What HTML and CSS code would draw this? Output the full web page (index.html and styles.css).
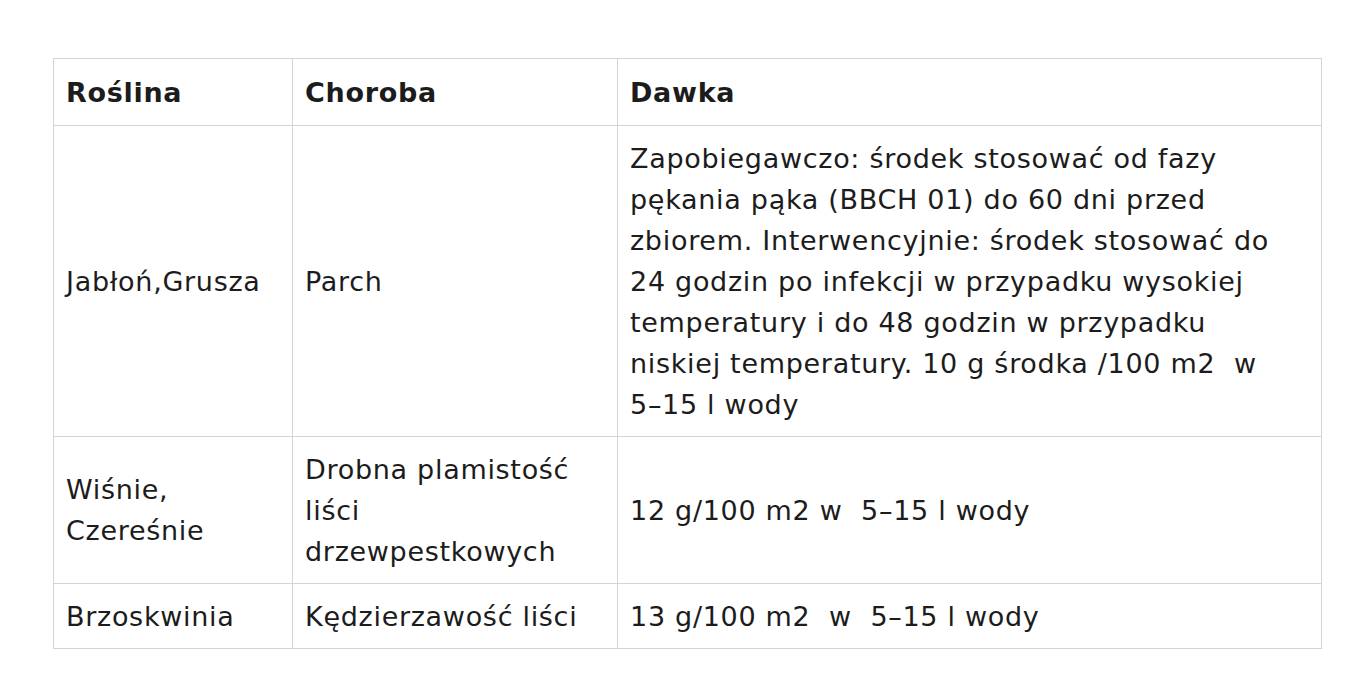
FILE: index.html
```html
<!DOCTYPE html>
<html lang="pl">
<head>
<meta charset="utf-8">
<link rel="stylesheet" href="styles.css">
</head>
<body>
<table class="dose-table">
  <colgroup>
    <col class="c1">
    <col class="c2">
    <col class="c3">
  </colgroup>
  <thead>
    <tr><th>Roślina</th><th>Choroba</th><th>Dawka</th></tr>
  </thead>
  <tbody>
    <tr class="r1">
      <td>Jabłoń,Grusza</td>
      <td>Parch</td>
      <td>Zapobiegawczo: środek stosować od fazy<br>pękania pąka (BBCH 01) do 60 dni przed<br>zbiorem. Interwencyjnie: środek stosować do<br>24 godzin po infekcji w przypadku wysokiej<br>temperatury i do 48 godzin w przypadku<br>niskiej temperatury. 10 g środka /100 m2&nbsp; w<br>5–15 l wody</td>
    </tr>
    <tr class="r2">
      <td>Wiśnie,<br>Czereśnie</td>
      <td>Drobna plamistość<br>liści<br>drzewpestkowych</td>
      <td>12 g/100 m2 w&nbsp; 5–15 l wody</td>
    </tr>
    <tr class="r3">
      <td>Brzoskwinia</td>
      <td>Kędzierzawość liści</td>
      <td>13 g/100 m2&nbsp; w&nbsp; 5–15 l wody</td>
    </tr>
  </tbody>
</table>
</body>
</html>
```
FILE: styles.css
```css
html, body {
  margin: 0;
  background: #ffffff;
}
body {
  padding: 58px 0 0 53px;
  font-family: "DejaVu Sans", sans-serif;
  color: #1c1c1c;
}
.dose-table {
  border-collapse: collapse;
  width: 1268px;
  table-layout: fixed;
  font-size: 27px;
  letter-spacing: 0.7px;
  line-height: 41px;
}
.c1 { width: 239px; }
.c2 { width: 325px; }
.c3 { width: 704px; }
.dose-table th,
.dose-table td {
  border: 1px solid #d4d4d4;
  padding: 11.5px 12px;
  text-align: left;
  vertical-align: middle;
  white-space: nowrap;
}
.dose-table th {
  font-weight: bold;
  padding-top: 12.5px;
  padding-bottom: 12.5px;
}
```
